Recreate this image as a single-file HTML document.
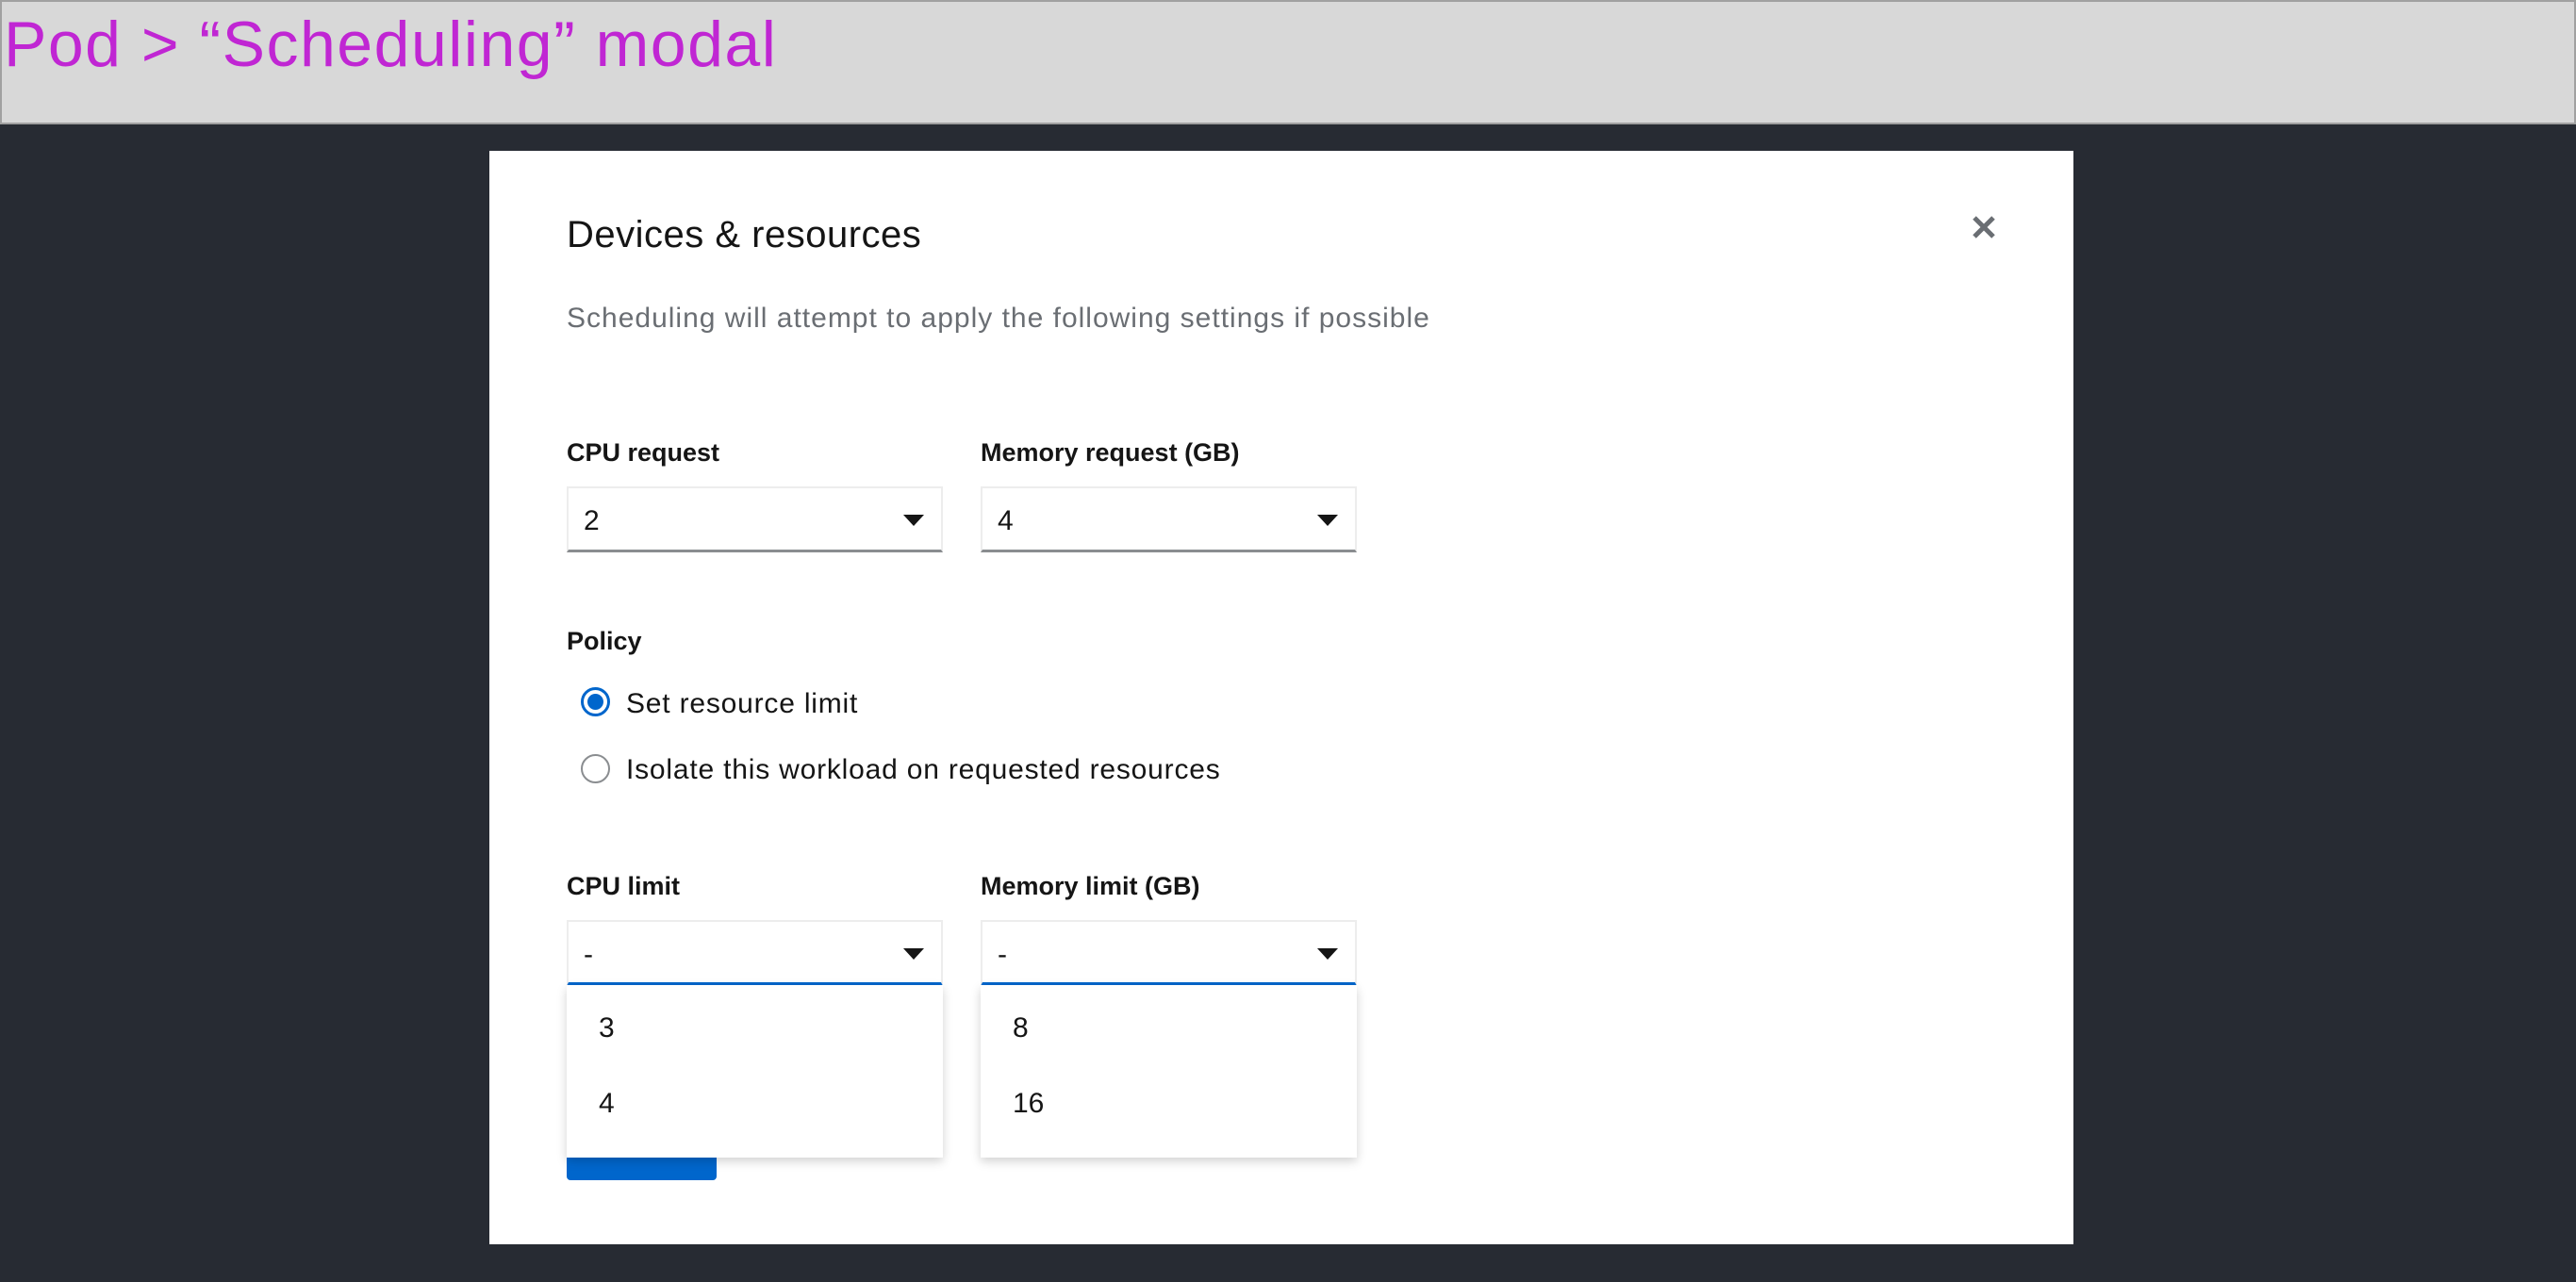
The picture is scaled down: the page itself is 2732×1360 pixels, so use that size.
<!DOCTYPE html>
<html><head><meta charset="utf-8"><style>
*{box-sizing:border-box;margin:0;padding:0}
body{width:2732px;height:1360px;background:#272b33;font-family:"Liberation Sans",sans-serif;position:relative;overflow:hidden;color:#151515}
.hdr{position:absolute;left:0;top:0;width:2732px;height:132px;background:#d8d8d8;border:2px solid #a0a0a0}
.hdr span{position:absolute;left:2px;top:6px;font-size:68px;color:#c026d3;letter-spacing:1.5px}
.modal{position:absolute;left:519px;top:160px;width:1680px;height:1160px;background:#fff}
.a{position:absolute;white-space:nowrap}
.t{font-size:40px;left:82px;top:67px;letter-spacing:0.5px}
.sub{font-size:30px;color:#6a6e73;left:82px;top:161px;letter-spacing:1px}
.lbl{font-size:27px;font-weight:bold}
.sel{position:absolute;width:399px;height:70px;border:2px solid #ededed;border-bottom:3px solid #8a8d90;background:#fff}
.sel span{position:absolute;left:16px;top:18px;font-size:30px}
.sel i{position:absolute;right:18px;top:28px;border-left:11px solid transparent;border-right:11px solid transparent;border-top:12px solid #151515}
.sel.f{border-bottom:4px solid #0066cc}
.menu{position:absolute;width:399px;height:183px;background:#fff;box-shadow:0 4px 10px rgba(0,0,0,.18)}
.menu span{position:absolute;left:34px;font-size:30px}
.radio{position:absolute;width:31px;height:31px;border-radius:50%;border:2px solid #8a8d90;background:#fff}
.radio.on{border:3px solid #0066cc}
.radio.on::after{content:"";position:absolute;left:4px;top:4px;width:17px;height:17px;border-radius:50%;background:#0066cc}
.rt{font-size:30px;letter-spacing:0.8px}
</style></head><body>
<div class="hdr"><span>Pod &gt; “Scheduling” modal</span></div>
<div class="modal">
<div class="a t">Devices &amp; resources</div>
<svg class="a" style="left:1572px;top:68px" width="26" height="26" viewBox="0 0 26 26"><path d="M3 3L23 23M23 3L3 23" stroke="#6a6e73" stroke-width="5"/></svg>
<div class="a sub">Scheduling will attempt to apply the following settings if possible</div>
<div class="a lbl" style="left:82px;top:305px">CPU request</div>
<div class="a lbl" style="left:521px;top:305px">Memory request (GB)</div>
<div class="sel" style="left:82px;top:356px"><span>2</span><i></i></div>
<div class="sel" style="left:521px;top:356px"><span>4</span><i></i></div>
<div class="a lbl" style="left:82px;top:505px">Policy</div>
<div class="radio on" style="left:97px;top:569px"></div>
<div class="a rt" style="left:145px;top:570px">Set resource limit</div>
<div class="radio" style="left:97px;top:640px"></div>
<div class="a rt" style="left:145px;top:640px">Isolate this workload on requested resources</div>
<div class="a lbl" style="left:82px;top:765px">CPU limit</div>
<div class="a lbl" style="left:521px;top:765px">Memory limit (GB)</div>
<div class="sel f" style="left:82px;top:816px"><span>-</span><i></i></div>
<div class="sel f" style="left:521px;top:816px"><span>-</span><i></i></div>
<div class="a" style="left:82px;top:1060px;width:159px;height:32px;background:#0066cc;border-radius:0 0 4px 4px"></div>
<div class="menu" style="left:82px;top:885px"><span style="top:29px">3</span><span style="top:109px">4</span></div>
<div class="menu" style="left:521px;top:885px"><span style="top:29px">8</span><span style="top:109px">16</span></div>
</div>
</body></html>
